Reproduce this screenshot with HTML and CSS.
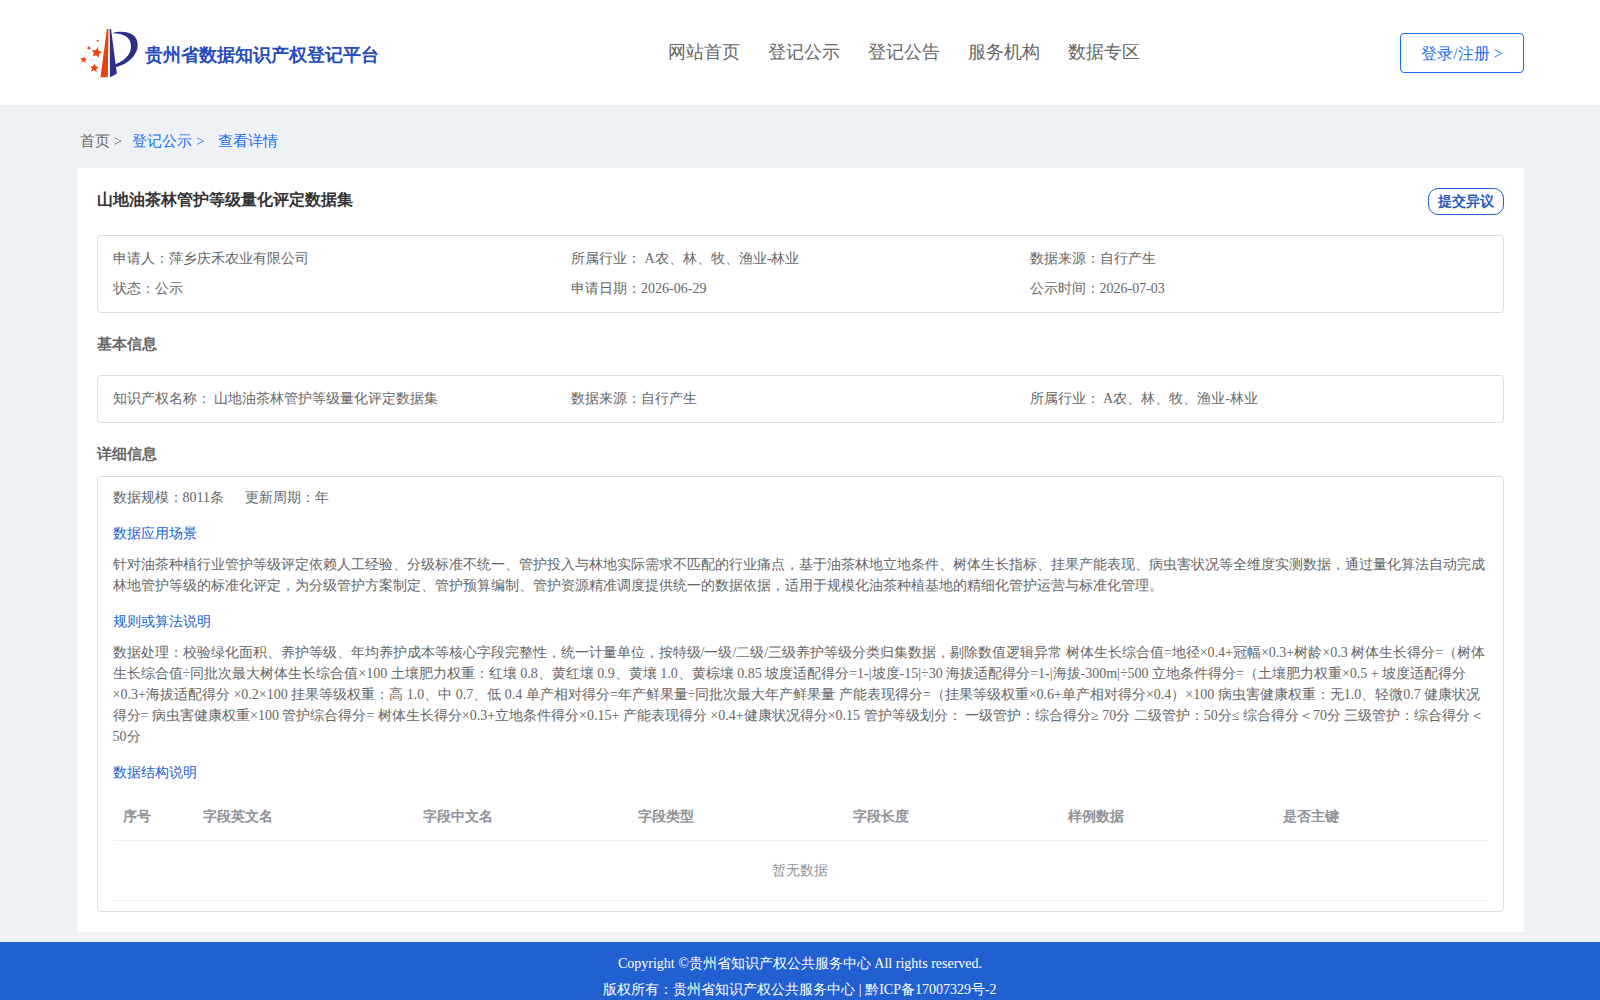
FILE: index.html
```html
<!DOCTYPE html>
<html>
<head>
<meta charset="utf-8">
<title>贵州省数据知识产权登记平台</title>
<link rel="stylesheet" href="styles.css">
</head>
<body>
<header class="header">
  <div class="brand">
    <svg class="logo" width="60" height="54" viewBox="0 0 60 54">
      <defs><path id="star" d="M0-5L1.400-1.900L4.750-1.550L2.300.750L2.950 4.050L0 2.400L-2.950 4.050L-2.300.750L-4.750-1.550L-1.400-1.900Z"/></defs>
      <path fill="#e8430f" d="M26.900 2H28.500L27.800 50.200H20.500Z"/>
      <path fill="#2b2f86" d="M29.700 2H31L36.900 46.800L30 50.200Z"/>
      <path fill="#2b2f86" d="M32 6.200C43 3 57.700 5 57.700 18C57.700 29 46 38.500 35.300 40L34.800 37.500C44 34 51 28 51 19C51 9.500 42 5.800 32 6.200Z"/>
      <g fill="#e8430f">
        <use href="#star" transform="translate(16.700 25.700) rotate(12) scale(1.100)"/>
        <use href="#star" transform="translate(14.300 41) rotate(6) scale(.92)"/>
        <use href="#star" transform="translate(3.700 32.700) rotate(6) scale(.7)"/>
        <use href="#star" transform="translate(9 21) rotate(25) scale(.45)"/>
        <use href="#star" transform="translate(17.700 13.900) scale(.3)"/>
      </g>
    </svg>
    <span class="brand-name">贵州省数据知识产权登记平台</span>
  </div>
  <nav class="nav"><a>网站首页</a><a>登记公示</a><a>登记公告</a><a>服务机构</a><a>数据专区</a></nav>
  <a class="login">登录/注册 &gt;</a>
</header>
<main class="main">
  <div class="crumbs"><span>首页 &gt;</span><a class="crumb-mid">登记公示 &gt;</a><a class="crumb-last">查看详情</a></div>
  <section class="card">
    <div class="card-head"><h1 class="title">山地油茶林管护等级量化评定数据集</h1><a class="objection">提交异议</a></div>
    <div class="box grid summary">
      <span>申请人：萍乡庆禾农业有限公司</span><span>所属行业： A农、林、牧、渔业-林业</span><span>数据来源：自行产生</span>
      <span>状态：公示</span><span>申请日期：2026-06-29</span><span>公示时间：2026-07-03</span>
    </div>
    <h2 class="heading heading-basic">基本信息</h2>
    <div class="box grid">
      <span>知识产权名称： 山地油茶林管护等级量化评定数据集</span><span>数据来源：自行产生</span><span>所属行业： A农、林、牧、渔业-林业</span>
    </div>
    <h2 class="heading heading-detail">详细信息</h2>
    <div class="box detail">
      <div class="scale"><span>数据规模：8011条</span><span>更新周期：年</span></div>
      <h3 class="sub">数据应用场景</h3>
      <p class="para">针对油茶种植行业管护等级评定依赖人工经验、分级标准不统一、管护投入与林地实际需求不匹配的行业痛点，基于油茶林地立地条件、树体生长指标、挂果产能表现、病虫害状况等全维度实测数据，通过量化算法自动完成林地管护等级的标准化评定，为分级管护方案制定、管护预算编制、管护资源精准调度提供统一的数据依据，适用于规模化油茶种植基地的精细化管护运营与标准化管理。</p>
      <h3 class="sub">规则或算法说明</h3>
      <p class="para">数据处理：校验绿化面积、养护等级、年均养护成本等核心字段完整性，统一计量单位，按特级/一级/二级/三级养护等级分类归集数据，剔除数值逻辑异常 树体生长综合值=地径×0.4+冠幅×0.3+树龄×0.3 树体生长得分=（树体生长综合值÷同批次最大树体生长综合值×100 土壤肥力权重：红壤 0.8、黄红壤 0.9、黄壤 1.0、黄棕壤 0.85 坡度适配得分=1-|坡度-15|÷30 海拔适配得分=1-|海拔-300m|÷500 立地条件得分=（土壤肥力权重×0.5 + 坡度适配得分×0.3+海拔适配得分 ×0.2×100 挂果等级权重：高 1.0、中 0.7、低 0.4 单产相对得分=年产鲜果量÷同批次最大年产鲜果量 产能表现得分=（挂果等级权重×0.6+单产相对得分×0.4）×100 病虫害健康权重：无1.0、轻微0.7 健康状况得分= 病虫害健康权重×100 管护综合得分= 树体生长得分×0.3+立地条件得分×0.15+ 产能表现得分 ×0.4+健康状况得分×0.15 管护等级划分： 一级管护：综合得分≥ 70分 二级管护：50分≤ 综合得分＜70分 三级管护：综合得分＜50分</p>
      <h3 class="sub">数据结构说明</h3>
      <table class="table">
        <colgroup><col class="col-index"><col class="col-name"><col><col><col><col><col></colgroup>
        <thead><tr><th>序号</th><th>字段英文名</th><th>字段中文名</th><th>字段类型</th><th>字段长度</th><th>样例数据</th><th>是否主键</th></tr></thead>
        <tbody><tr><td colspan="7">暂无数据</td></tr></tbody>
      </table>
    </div>
  </section>
</main>
<footer class="footer"><div>Copyright ©贵州省知识产权公共服务中心 All rights reserved.</div><div>版权所有：贵州省知识产权公共服务中心 | 黔ICP备17007329号-2</div></footer>
</body>
</html>
```
FILE: styles.css
```css
* { box-sizing: border-box; }
html { height: 100%; overflow: hidden; }
body {
  margin: 0;
  height: 100%;
  overflow: hidden;
  background: #eef2f5;
  color: #666;
  font-family: "Liberation Serif", serif;
  font-size: 14px;
}
h1, h2, h3, p { margin: 0; }
.header {
  display: grid;
  grid-template-columns: 588px auto 1fr;
  height: 105px;
  padding: 0 76px 0 80px;
  background: #fff;
}
.brand { display: flex; align-items: flex-start; padding-top: 27px; }
.logo { flex: none; }
.brand-name {
  margin-left: 5px;
  color: #264bbd;
  font-size: 18px;
  font-weight: bold;
  line-height: 56px;
  white-space: nowrap;
}
.nav {
  display: flex;
  gap: 28px;
  padding-top: 37px;
  font-size: 18px;
  line-height: 30px;
  color: #666;
}
.login {
  justify-self: end;
  width: 124px;
  height: 40px;
  margin-top: 33px;
  border: 1px solid #1a6ff0;
  border-radius: 4px;
  color: #1a6ff0;
  font-size: 16px;
  line-height: 40px;
  text-align: center;
}
.main { width: 1447px; margin: 0 auto 0 77px; }
.crumbs {
  display: flex;
  height: 63px;
  padding: 26px 3px 0;
  font-size: 15px;
  line-height: 20px;
}
.crumbs a { color: #1a6ff0; }
.crumb-mid { margin-left: 10px; }
.crumb-last { margin-left: 13.6px; }
.card { height: 764px; padding: 20px; background: #fff; }
.card-head { display: flex; justify-content: space-between; height: 47px; }
.title { color: #333; font-size: 16px; line-height: 24px; }
.objection {
  width: 76px;
  height: 27px;
  border: 1px solid #2060d0;
  border-radius: 10px;
  color: #1e5bc6;
  font-weight: bold;
  line-height: 26px;
  text-align: center;
}
.box { border: 1px solid #dcdcdc; border-radius: 4px; padding: 8px 15px 8px 14.6px; }
.grid {
  display: grid;
  grid-template-columns: repeat(3, 1fr);
  line-height: 30px;
  white-space: nowrap;
}
.heading { font-size: 15px; line-height: 20px; }
.heading-basic { padding: 21px 0; }
.heading-detail { padding: 21px 0 12px; }
.detail { height: 436px; padding: 6px 15px 0 14.6px; }
.scale { display: flex; gap: 21px; line-height: 30px; }
.sub {
  padding-top: 10px;
  color: #2060d0;
  font-size: 14px;
  font-weight: normal;
  line-height: 21px;
}
.para { padding: 10px 0 5px; line-height: 21px; }
.table {
  width: 100%;
  margin-top: 10px;
  border-spacing: 0;
  table-layout: fixed;
  color: #909399;
}
.col-index { width: 80px; }
.col-name { width: 220px; }
.table th {
  height: 48px;
  padding: 1px 10px 0;
  border-bottom: 1px solid #ebeef5;
  text-align: left;
}
.table td { height: 60px; padding: 0 1px 0 0; border-bottom: 1px solid #ebeef5; text-align: center; }
.footer {
  height: 58px;
  margin-top: 10px;
  padding-top: 9px;
  background: #2060d0;
  color: #fff;
  line-height: 26px;
  text-align: center;
}
```
